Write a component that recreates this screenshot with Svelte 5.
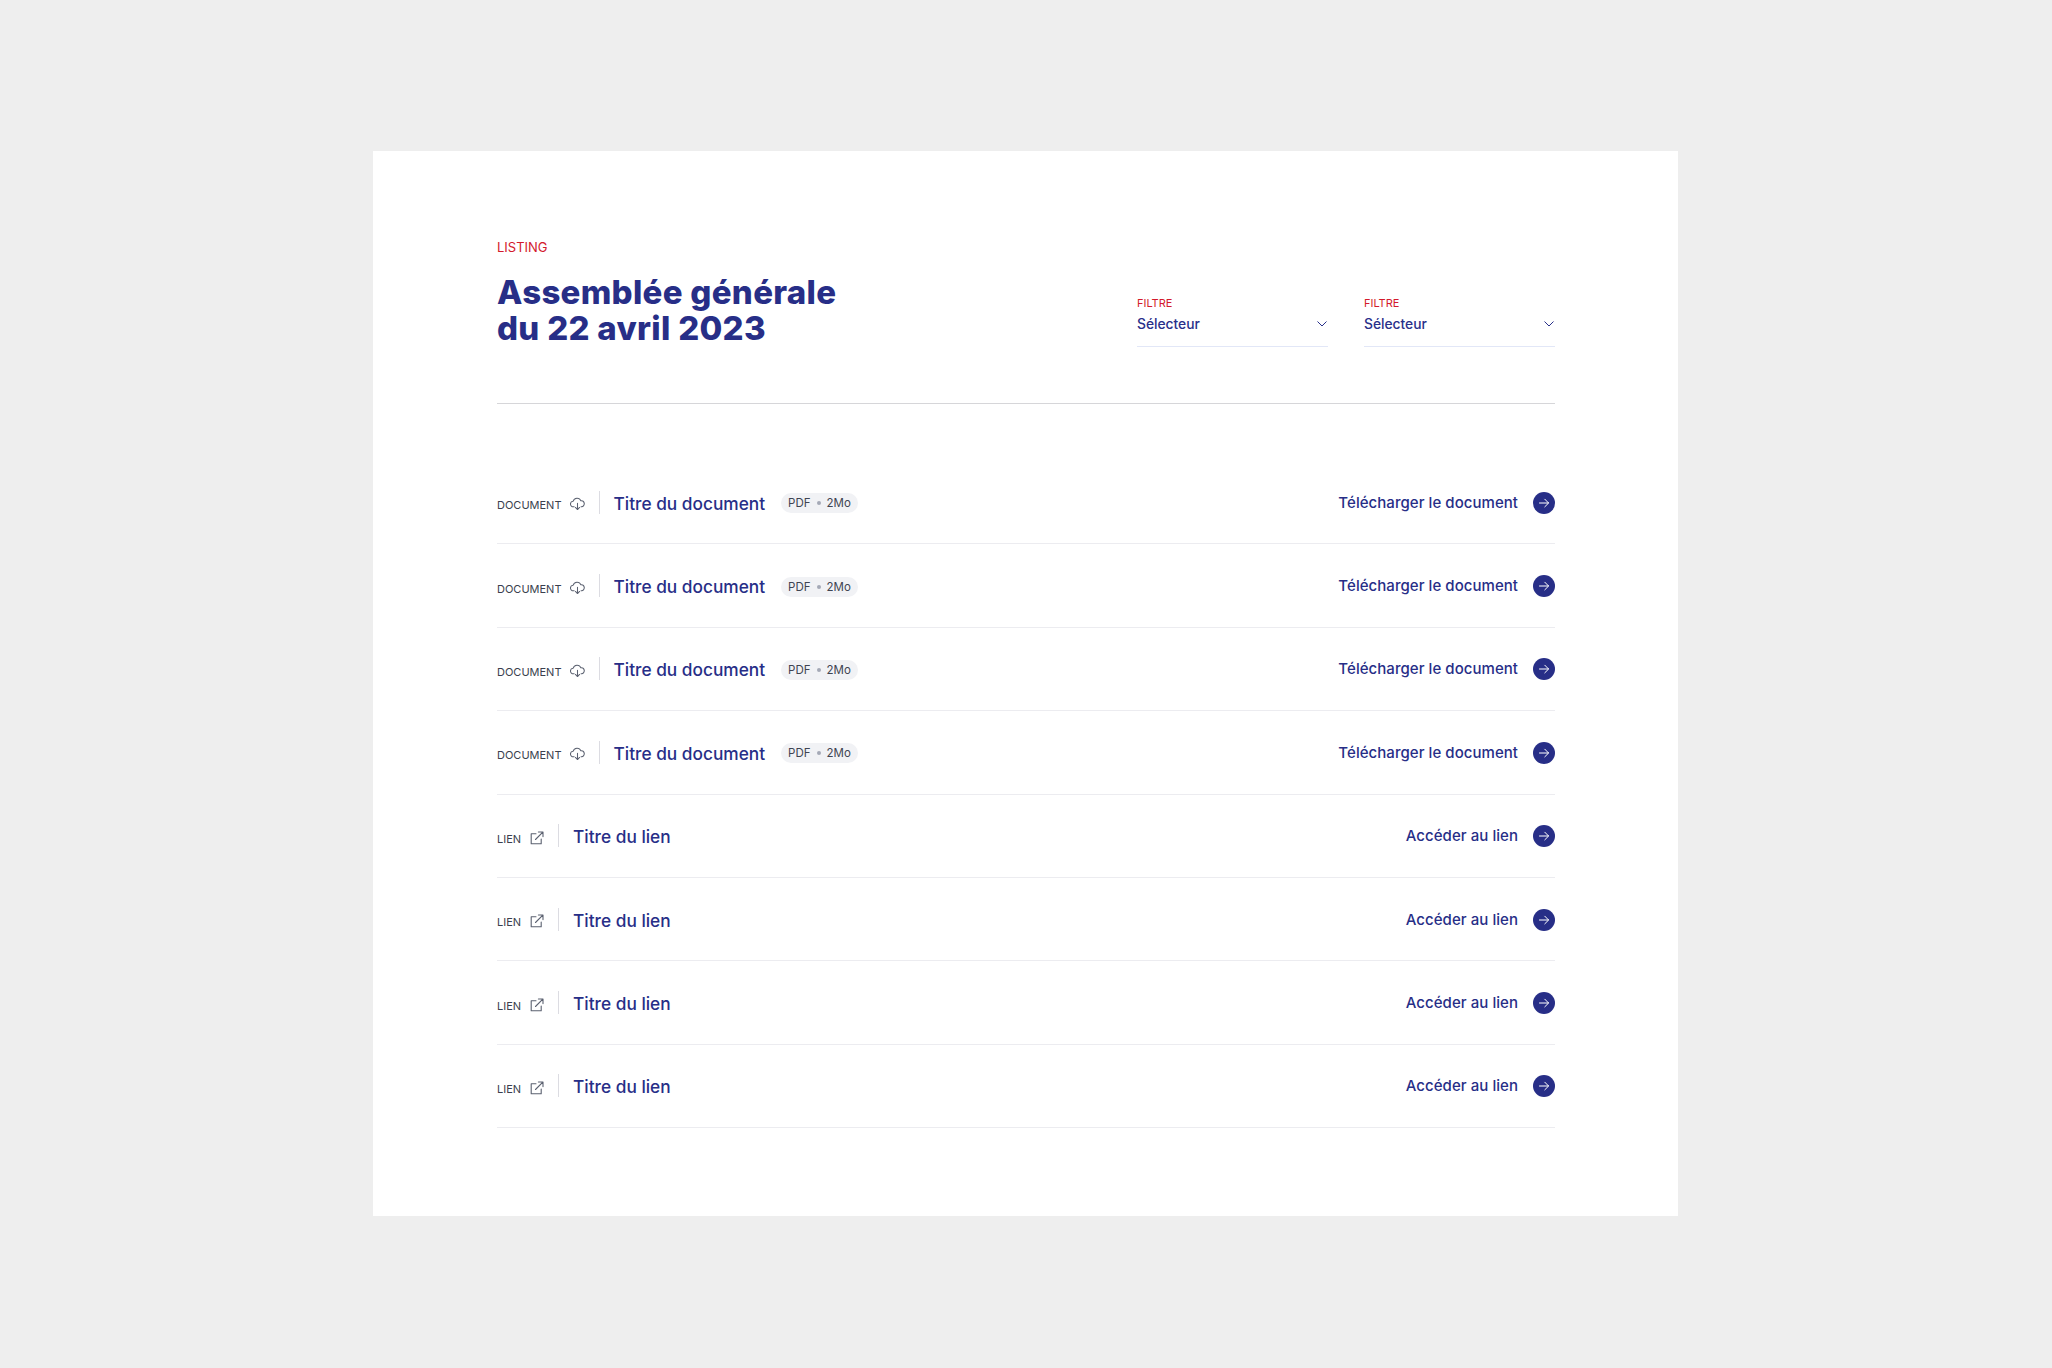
<script>
	const docs = Array(4).fill({ kind: 'document', label: 'DOCUMENT', title: 'Titre du document', action: 'Télécharger le document' });
	const links = Array(4).fill({ kind: 'link', label: 'LIEN', title: 'Titre du lien', action: 'Accéder au lien' });
	const rows = [...docs, ...links];
</script>

<main class="page">
	<section class="card">
		<header class="head">
			<div class="intro">
				<p class="eyebrow">LISTING</p>
				<h1>Assemblée générale<br />du 22 avril 2023</h1>
			</div>
			<div class="filters">
				{#each [0, 1] as f (f)}
					<div class="filter">
						<span class="filter-label">FILTRE</span>
						<div class="select">
							<span>Sélecteur</span>
							<svg width="12" height="8" viewBox="0 0 12 8" fill="none" stroke="#29308a" stroke-width="1">
								<path d="M1.5 1.5 6 6l4.5-4.5" />
							</svg>
						</div>
					</div>
				{/each}
			</div>
		</header>

		<ul class="list">
			{#each rows as row}
				<li class="row">
					<span class="type">{row.label}</span>
					{#if row.kind === 'document'}
						<svg class="type-icon cloud" width="15" height="14" viewBox="0 0 16 14" fill="none" stroke="#5b6170" stroke-width="1.1" stroke-linecap="round" stroke-linejoin="round">
							<path d="M4.4 10H3.6A3 3 0 0 1 3.4 4 4.3 4.3 0 0 1 11.6 3.6 3.2 3.2 0 0 1 12.4 10h-.6" />
							<path d="M8 6.2V12.8M5.8 10.7 8 12.9l2.2-2.2" />
						</svg>
					{:else}
						<svg class="type-icon" width="15" height="14" viewBox="0 0 15 14" fill="none" stroke="#5b6170" stroke-width="1.1" stroke-linecap="round" stroke-linejoin="round">
							<path d="M6 2.8H1.2v10h10V8" />
							<path d="M5.5 8.5 12.8 1.2M8.4 1h4.6v4.6" />
						</svg>
					{/if}
					<span class="sep"></span>
					<span class="title">{row.title}</span>
					{#if row.kind === 'document'}
						<span class="pill">PDF<i></i>2Mo</span>
					{/if}
					<span class="action">{row.action}</span>
					<span class="go">
						<svg width="12" height="12" viewBox="0 0 12 12" fill="none" stroke="#fff" stroke-width="1" stroke-linecap="round" stroke-linejoin="round">
							<path d="M1.5 6h9M6.8 2.2 10.6 6 6.8 9.8" />
						</svg>
					</span>
				</li>
			{/each}
		</ul>
	</section>
</main>

<style>
	:global(body) {
		background: #eeeeee;
		font-family: Inter, 'Noto Sans', sans-serif;
	}
	.page {
		box-sizing: border-box;
		height: 1368px;
		padding: 151px 0 0 373px;
	}
	.card {
		box-sizing: border-box;
		width: 1305px;
		height: 1065px;
		padding: 88px 123px 0 124px;
		background: #fff;
	}
	.head {
		display: flex;
		align-items: flex-end;
		justify-content: space-between;
		box-sizing: border-box;
		height: 165px;
		padding-bottom: 56px;
		border-bottom: 1px solid #d6d6d9;
	}
	.intro {
		margin-bottom: 1px;
	}
	.eyebrow {
		margin: 0 0 19px;
		color: #d31a2c;
		font-size: 13px;
		line-height: 16px;
	}
	h1 {
		margin: 0;
		color: #272e87;
		font-size: 33px;
		font-weight: 800;
		line-height: 36px;
		letter-spacing: 0.3px;
	}
	.filters {
		display: flex;
		gap: 36px;
	}
	.filter {
		width: 191px;
	}
	.filter-label {
		display: block;
		color: #d31a2c;
		font-size: 11px;
		line-height: 14px;
	}
	.select {
		display: flex;
		align-items: center;
		justify-content: space-between;
		box-sizing: border-box;
		height: 37px;
		padding-bottom: 9px;
		border-bottom: 1px solid #e2e7f7;
		color: #29308a;
		font-size: 13.8px;
		font-weight: 500;
	}
	.select svg {
		margin-top: 1px;
	}
	.list {
		margin: 57px 0 0;
		padding: 0;
		list-style: none;
	}
	.row {
		display: flex;
		align-items: center;
		box-sizing: border-box;
		height: 83.4px;
		border-bottom: 1px solid #ececf0;
		color: #272e87;
	}
	.type {
		margin-top: 6px;
		color: #3a3f4e;
		font-size: 11px;
		line-height: 16px;
	}
	.type-icon {
		margin-left: 9px;
		margin-top: 4px;
	}
	.type-icon.cloud {
		margin-left: 8px;
		margin-right: 1px;
	}
	.sep {
		width: 1px;
		height: 23px;
		margin: 0 14px 0 13px;
		background: #dcdce2;
	}
	.title {
		margin-top: 2px;
		color: #272e87;
		font-size: 17.3px;
		font-weight: 500;
	}
	.pill {
		display: inline-flex;
		align-items: center;
		gap: 6px;
		height: 20px;
		margin-top: 2px;
		margin-left: 16px;
		padding: 0 7px;
		border-radius: 10px;
		background: #f1f2f5;
		color: #3f4452;
		font-size: 11.5px;
	}
	.pill i {
		width: 4px;
		height: 4px;
		border-radius: 50%;
		background: #a4a9b6;
	}
	.action {
		margin-left: auto;
		font-size: 15px;
		font-weight: 500;
		letter-spacing: 0.05px;
	}
	.go {
		display: flex;
		align-items: center;
		justify-content: center;
		width: 22px;
		height: 22px;
		margin-top: 1px;
		margin-left: 15px;
		border-radius: 50%;
		background: #272e87;
	}
</style>
